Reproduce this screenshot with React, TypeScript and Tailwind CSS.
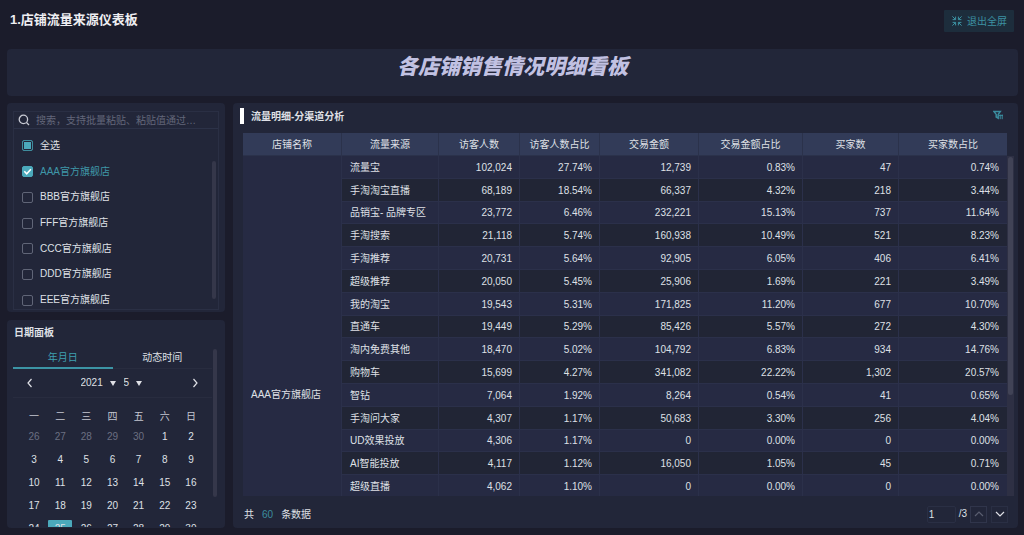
import React, { useState } from 'react';

interface TrafficRow {
    source: string;
    values: string[];
}

const columns = ['店铺名称', '流量来源', '访客人数', '访客人数占比', '交易金额', '交易金额占比', '买家数', '买家数占比'];

const trafficRows: TrafficRow[] = [
    { source: '流量宝', values: ['102,024', '27.74%', '12,739', '0.83%', '47', '0.74%'] },
    { source: '手淘淘宝直播', values: ['68,189', '18.54%', '66,337', '4.32%', '218', '3.44%'] },
    { source: '品销宝- 品牌专区', values: ['23,772', '6.46%', '232,221', '15.13%', '737', '11.64%'] },
    { source: '手淘搜索', values: ['21,118', '5.74%', '160,938', '10.49%', '521', '8.23%'] },
    { source: '手淘推荐', values: ['20,731', '5.64%', '92,905', '6.05%', '406', '6.41%'] },
    { source: '超级推荐', values: ['20,050', '5.45%', '25,906', '1.69%', '221', '3.49%'] },
    { source: '我的淘宝', values: ['19,543', '5.31%', '171,825', '11.20%', '677', '10.70%'] },
    { source: '直通车', values: ['19,449', '5.29%', '85,426', '5.57%', '272', '4.30%'] },
    { source: '淘内免费其他', values: ['18,470', '5.02%', '104,792', '6.83%', '934', '14.76%'] },
    { source: '购物车', values: ['15,699', '4.27%', '341,082', '22.22%', '1,302', '20.57%'] },
    { source: '智钻', values: ['7,064', '1.92%', '8,264', '0.54%', '41', '0.65%'] },
    { source: '手淘问大家', values: ['4,307', '1.17%', '50,683', '3.30%', '256', '4.04%'] },
    { source: 'UD效果投放', values: ['4,306', '1.17%', '0', '0.00%', '0', '0.00%'] },
    { source: 'AI智能投放', values: ['4,117', '1.12%', '16,050', '1.05%', '45', '0.71%'] },
    { source: '超级直播', values: ['4,062', '1.10%', '0', '0.00%', '0', '0.00%'] },
];

const shops = ['AAA官方旗舰店', 'BBB官方旗舰店', 'FFF官方旗舰店', 'CCC官方旗舰店', 'DDD官方旗舰店', 'EEE官方旗舰店'];

const weekDays = ['一', '二', '三', '四', '五', '六', '日'];

const weeks = [
    [26, 27, 28, 29, 30, 1, 2],
    [3, 4, 5, 6, 7, 8, 9],
    [10, 11, 12, 13, 14, 15, 16],
    [17, 18, 19, 20, 21, 22, 23],
    [24, 25, 26, 27, 28, 29, 30],
];

const Chevron: React.FC<{ d: string; className?: string }> = ({ d, className }) => (
    <svg viewBox="0 0 10 10" className={className} fill="none" stroke="currentColor" strokeWidth="1.2" aria-hidden="true">
        <path d={d} />
    </svg>
);

const ShopFilter: React.FC = () => {
    const [selected, setSelected] = useState<string[]>(['AAA官方旗舰店']);
    const [search, setSearch] = useState('');

    const allSelected = selected.length === shops.length;
    const someSelected = selected.length > 0 && !allSelected;

    const toggleShop = (shop: string) => {
        setSelected((prev) => (prev.includes(shop) ? prev.filter((s) => s !== shop) : [...prev, shop]));
    };

    return (
        <section className="flex h-[209px] shrink-0 flex-col rounded bg-[#222639] px-1.5 pt-2 pb-0.5">
            <div className="flex min-h-0 flex-1 flex-col border border-[#2a2f44]">
                <label className="flex h-[17px] shrink-0 items-center gap-1.5 border-b border-[#2c3248] pl-1">
                    <svg viewBox="0 0 12 12" className="h-3 w-3 shrink-0 text-[#c8cad4]" fill="none" stroke="currentColor" strokeWidth="1.3" aria-hidden="true">
                        <circle cx="5.4" cy="5.4" r="4.2" />
                        <path d="M8.5 8.5 11 11" />
                    </svg>
                    <input
                        type="text"
                        aria-label="搜索店铺"
                        placeholder="搜索，支持批量粘贴、粘贴值通过…"
                        value={search}
                        onChange={(e) => setSearch(e.target.value)}
                        className="h-4 w-full min-w-0 bg-transparent pt-px outline-none placeholder:text-[#62667a]"
                    />
                </label>
                <div className="flex min-h-0 flex-1 overflow-hidden pt-1">
                    <ul className="flex h-[180px] min-w-0 flex-1 flex-col">
                        <li className="flex flex-1 items-center">
                            <label className="flex items-center gap-[7px] pl-2">
                                <input
                                    type="checkbox"
                                    checked={allSelected}
                                    ref={(el) => {
                                        if (el) el.indeterminate = someSelected;
                                    }}
                                    onChange={() => setSelected(allSelected ? [] : shops)}
                                    className="peer h-[11px] w-[11px] appearance-none rounded-[2px] border border-[#606577] checked:bg-[#4ba9bb] indeterminate:border-[#3f8c9d] indeterminate:bg-[#4ba9bb] indeterminate:shadow-[inset_0_0_0_1px_#222639]"
                                />
                                全选
                            </label>
                        </li>
                        {shops
                            .filter((shop) => shop.includes(search))
                            .map((shop) => (
                                <li key={shop} className="flex flex-1 items-center">
                                    <label className="flex items-center gap-[7px] pl-2 has-checked:text-[#3f97a8]">
                                        <span className="relative flex">
                                            <input
                                                type="checkbox"
                                                checked={selected.includes(shop)}
                                                onChange={() => toggleShop(shop)}
                                                className="peer h-[11px] w-[11px] appearance-none rounded-[2px] border border-[#606577] checked:border-[#4ba9bb] checked:bg-[#4ba9bb]"
                                            />
                                            <svg viewBox="0 0 11 11" className="pointer-events-none absolute inset-0 hidden h-[11px] w-[11px] text-white peer-checked:block" fill="none" stroke="currentColor" strokeWidth="1.6" aria-hidden="true">
                                                <path d="M2.3 5.3 4.7 7.8 8.9 3.3" />
                                            </svg>
                                        </span>
                                        {shop}
                                    </label>
                                </li>
                            ))}
                    </ul>
                    <div className="mt-7 mr-0.5 mb-2.5 w-1 rounded-full bg-[#35374a]" />
                </div>
            </div>
        </section>
    );
};

const DatePanel: React.FC = () => {
    const [selectedDay, setSelectedDay] = useState('4-25');

    return (
        <section className="flex min-h-0 flex-1 flex-col rounded bg-[#222639] px-1.5 pb-px">
            <h2 className="h-7 shrink-0 pt-px pl-px leading-6 font-bold">日期面板</h2>
            <div className="flex min-h-0 flex-1 gap-px overflow-hidden">
                <div className="min-w-0 flex-1">
                    <div role="tablist" className="flex h-[21px] border-b border-[#282c3f]">
                        <button role="tab" aria-selected="true" className="h-[21px] flex-1 border-b-2 border-[#3c94a5] text-[#3f9fb0]">
                            年月日
                        </button>
                        <button role="tab" aria-selected="false" className="h-[21px] flex-1 border-b-2 border-transparent">
                            动态时间
                        </button>
                    </div>
                    <div className="flex h-[29px] items-center justify-between border-b border-[#282c3f] px-3">
                        <button aria-label="上个月">
                            <Chevron d="M6.5 1 3 5 6.5 9" className="h-2.5 w-2.5" />
                        </button>
                        <div className="flex items-center gap-2 pr-[3px]">
                            <label className="flex items-center">
                                <select aria-label="年" defaultValue="2021" className="w-[29px] appearance-none bg-transparent">
                                    <option>2021</option>
                                </select>
                                <svg viewBox="0 0 6 5" className="h-[5px] w-1.5" fill="currentColor" aria-hidden="true">
                                    <path d="M0 0h6L3 5z" />
                                </svg>
                            </label>
                            <label className="flex items-center">
                                <select aria-label="月" defaultValue="5" className="w-3 appearance-none bg-transparent">
                                    <option>5</option>
                                </select>
                                <svg viewBox="0 0 6 5" className="h-[5px] w-1.5" fill="currentColor" aria-hidden="true">
                                    <path d="M0 0h6L3 5z" />
                                </svg>
                            </label>
                        </div>
                        <button aria-label="下个月">
                            <Chevron d="M3.5 1 7 5 3.5 9" className="h-2.5 w-2.5" />
                        </button>
                    </div>
                    <div className="px-2 pt-2.5">
                        <table className="w-full table-fixed text-center">
                            <thead>
                                <tr className="h-[17px]">
                                    {weekDays.map((day) => (
                                        <th key={day} className="p-0 font-normal text-[#c5c7d1]">
                                            {day}
                                        </th>
                                    ))}
                                </tr>
                            </thead>
                            <tbody>
                                {weeks.map((week, w) => (
                                    <tr key={w} className="h-[23px]">
                                        {week.map((day) => {
                                            const id = `${w}-${day}`;
                                            const outside = w === 0 && day > 7;
                                            return (
                                                <td key={id} className="px-px py-0">
                                                    <button
                                                        onClick={() => setSelectedDay(id)}
                                                        className={`block h-[18px] w-full ${outside ? 'text-[#6b6f82]' : ''} ${
                                                            selectedDay === id ? 'rounded-[1px] bg-[#4ba9bb]' : ''
                                                        }`}
                                                    >
                                                        {day}
                                                    </button>
                                                </td>
                                            );
                                        })}
                                    </tr>
                                ))}
                            </tbody>
                        </table>
                    </div>
                </div>
                <div className="mr-0.5 mt-px mb-[30px] w-1 rounded-full bg-[#35374a]" />
            </div>
        </section>
    );
};

const TrafficTable: React.FC = () => {
    return (
        <section className="flex min-w-0 flex-1 flex-col rounded bg-[#222639]">
            <div className="flex h-[30px] shrink-0 items-start justify-between pt-[5px] pr-[15px] pl-[7px]">
                <h2 className="flex h-4 items-center gap-[7px] font-bold">
                    <span className="h-4 w-1 bg-white" />
                    <span className="pt-0.5">流量明细-分渠道分析</span>
                </h2>
                <button aria-label="筛选" className="mt-0.5 text-[#3b8d9f]">
                    <svg viewBox="0 0 10 10" className="h-2.5 w-2.5" fill="none" stroke="currentColor" strokeWidth="1.5" aria-hidden="true">
                        <path d="M.9 1.5h6.4L5.2 4.4v3.8L3.2 7V4.4z" />
                        <path d="M7.2 4.6v4.6M9.2 4.6v4.6M6 5.4h4" strokeWidth="1" />
                    </svg>
                </button>
            </div>

            <div className="flex min-h-0 flex-1 overflow-hidden pr-1 pl-2.5">
                <div className="min-w-0 flex-1 overflow-hidden">
                    <table className="h-[365px] w-full table-fixed border-separate border-spacing-0">
                        <colgroup>
                            <col className="w-[99px]" />
                            <col className="w-[97px]" />
                            <col className="w-[81px]" />
                            <col className="w-[80px]" />
                            <col className="w-[99px]" />
                            <col className="w-[104px]" />
                            <col className="w-[96px]" />
                            <col className="w-[108px]" />
                        </colgroup>
                        <thead>
                            <tr className="h-[23px] bg-[#323b58]">
                                {columns.map((column) => (
                                    <th key={column} className="border-r border-b border-[#2b324b] p-0 pt-0.5 font-normal last:border-r-0">
                                        {column}
                                    </th>
                                ))}
                            </tr>
                        </thead>
                        <tbody>
                            {trafficRows.map((row, index) => (
                                <tr key={row.source} className="odd:bg-[#262a43] even:bg-[#212535]">
                                    {index === 0 && (
                                        <td rowSpan={trafficRows.length} className="border-r border-[#2b304a] bg-[#262a43] p-0 pt-[136px] pl-2">
                                            AAA官方旗舰店
                                        </td>
                                    )}
                                    <td className="border-r border-b border-[#2b304a] p-0 pt-0.5 pl-2">{row.source}</td>
                                    {row.values.map((value, i) => (
                                        <td key={i} className="border-r border-b border-[#2b304a] p-0 pt-0.5 pr-[7px] text-right last:border-r-0 last:pr-2">
                                            {value}
                                        </td>
                                    ))}
                                </tr>
                            ))}
                        </tbody>
                    </table>
                </div>
                {/* Scrollbar track */}
                <div className="mt-[23px] w-[7px] bg-[#2e3044] px-px">
                    <div className="mt-px h-[70%] rounded-full bg-[#414356]" />
                </div>
            </div>

            <div className="flex h-8 shrink-0 items-center justify-between pt-1 pr-2.5 pl-[11px]">
                <p className="flex gap-2 pt-0.5">
                    <span>共</span>
                    <span className="text-[#3b8d9f]">60</span>
                    <span>条数据</span>
                </p>
                <div className="flex items-center">
                    <input type="text" aria-label="页码" defaultValue="1" className="h-[17px] w-[29px] rounded-[2px] border border-[#2a2f44] bg-transparent pl-px outline-none" />
                    <span className="px-[3px]">/3</span>
                    <button aria-label="上一页" className="flex h-[17px] w-[17px] items-center justify-center border border-[#30354b] text-[#5a5e70]">
                        <Chevron d="M1 7 5 3 9 7" className="h-2.5 w-2.5" />
                    </button>
                    <button aria-label="下一页" className="ml-1 flex h-[17px] w-[17px] items-center justify-center border border-[#2a2f44]">
                        <Chevron d="M1 3 5 7 9 3" className="h-2.5 w-2.5" />
                    </button>
                </div>
            </div>
        </section>
    );
};

const App: React.FC = () => {
    return (
        <div
            lang="zh-CN"
            className="flex h-screen flex-col overflow-hidden bg-[#1b1c2b] pr-1.5 pb-[7px] pl-[7px] font-['Liberation_Sans','Noto_Sans_CJK_SC',sans-serif] text-[10px] leading-4 text-[#dfe0e6]"
        >
            <header className="flex h-[49px] shrink-0 items-start justify-between pt-2.5 pr-1 pl-[3px]">
                <h1 className="text-[13px] leading-5 font-bold text-[#eeeef2]">1.店铺流量来源仪表板</h1>
                <button className="flex h-[22px] items-center gap-[5px] rounded-[1px] bg-[#1d2d3c] pr-[7px] pl-2 text-[#3c91a2]">
                    <svg viewBox="0 0 10 10" className="h-2.5 w-2.5" fill="none" stroke="currentColor" strokeWidth="1" aria-hidden="true">
                        <path d="M.4.4 3.4 3.4M3.6.6v3h-3M9.6.4 6.6 3.4M6.4.6v3h3M.4 9.6 3.4 6.6M3.6 9.4v-3h-3M9.6 9.6 6.6 6.6M6.4 9.4v-3h3" />
                    </svg>
                    <span className="pt-px">退出全屏</span>
                </button>
            </header>

            <div className="h-[47px] shrink-0 rounded bg-[#222639] pt-1 text-center">
                <h2 className="text-[21px] leading-7 font-black text-[#c1c1e2] italic">各店铺销售情况明细看板</h2>
            </div>

            <main className="flex min-h-0 flex-1 gap-2 pt-[7px]">
                <aside className="flex w-[218px] shrink-0 flex-col gap-2">
                    <ShopFilter />
                    <DatePanel />
                </aside>
                <TrafficTable />
            </main>
        </div>
    );
};

export default App;
